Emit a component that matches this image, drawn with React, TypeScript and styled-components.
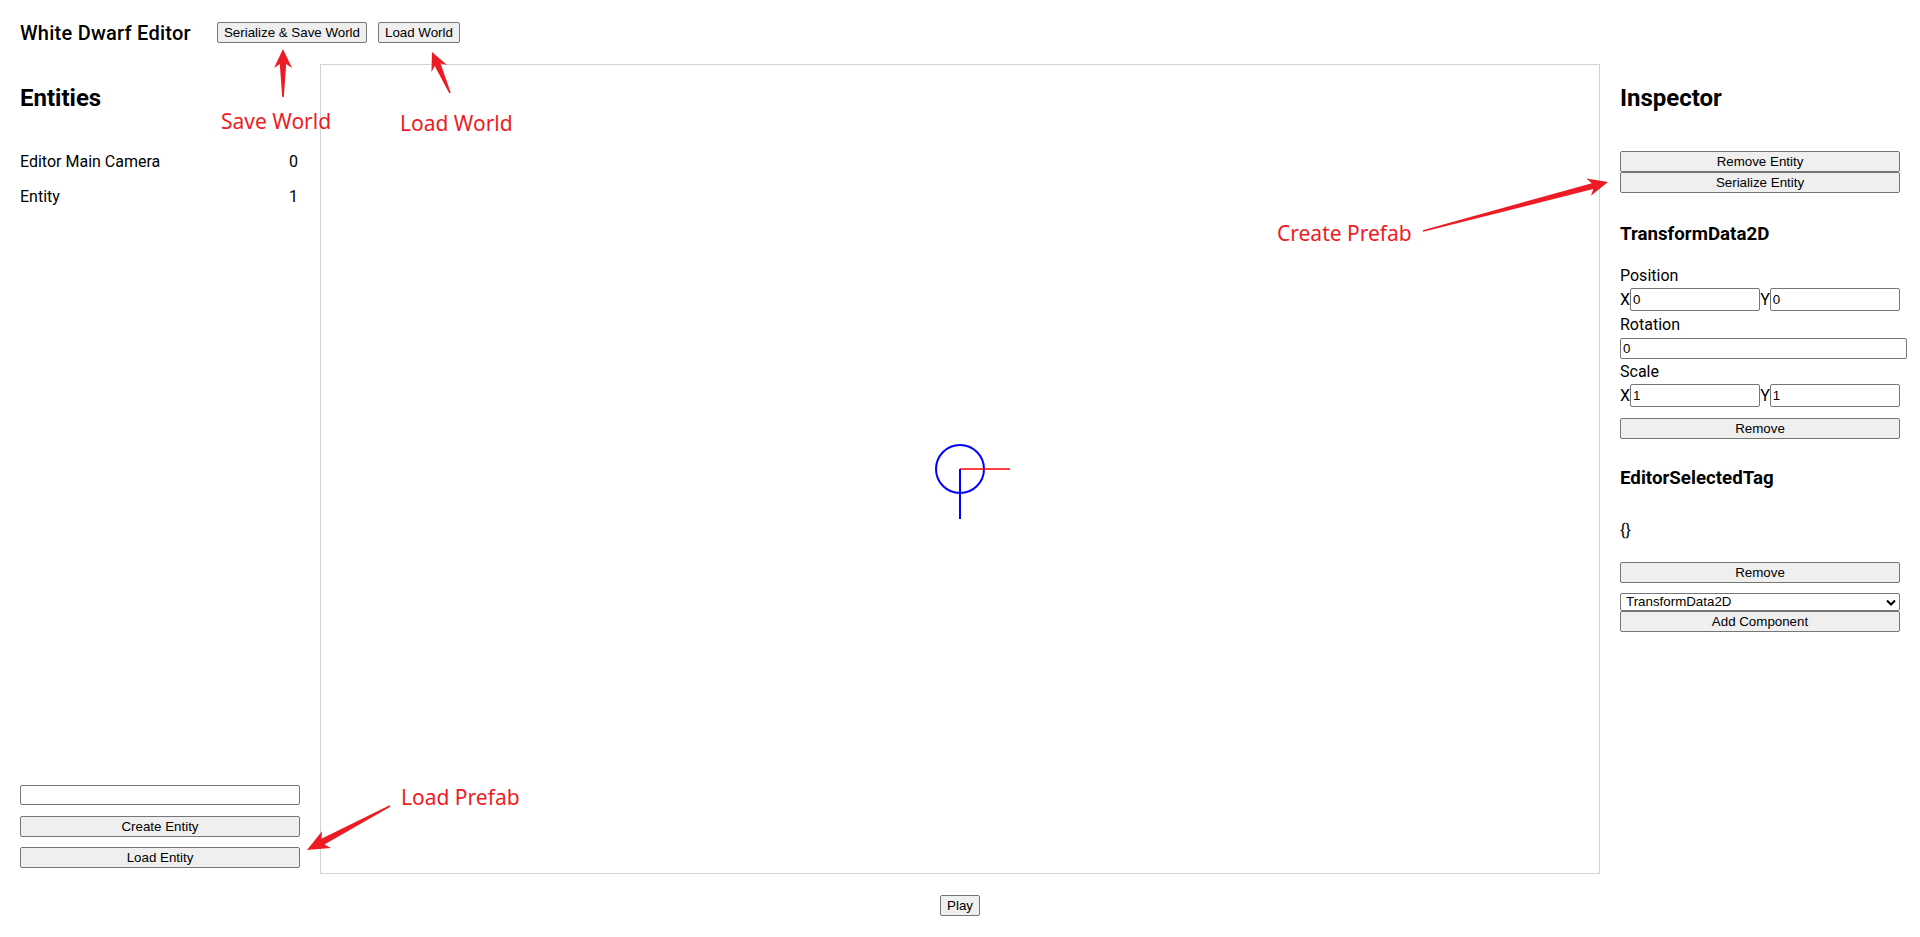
import React from "react";
import styled, { createGlobalStyle } from "styled-components";

const GlobalStyle = createGlobalStyle`
  html, body {
    margin: 0;
    padding: 0;
    background: #ffffff;
    color: #000000;
    font-family: Roboto, "Liberation Sans", Arial, sans-serif;
  }
  * { box-sizing: border-box; }
`;

const Page = styled.div`
  position: relative;
  width: 1920px;
  height: 937px;
  padding: 22px 20px 0;
  overflow: hidden;
`;

const Header = styled.header`
  display: flex;
  align-items: center;
  height: 21px;
`;

const Title = styled.div`
  font-size: 20px;
  line-height: 22px;
  font-weight: 500;
  letter-spacing: 0.25px;
  margin-right: 26px;
`;

const HeaderActions = styled.div`
  display: flex;
  gap: 11px;
`;

const Btn = styled.button<{ $block?: boolean; $mt?: number }>`
  display: block;
  flex: none;
  height: 21px;
  width: ${(p) => (p.$block ? "100%" : "auto")};
  margin-top: ${(p) => p.$mt ?? 0}px;
  padding: 0 6px;
  font-family: "Liberation Sans", Arial, sans-serif;
  font-size: 13.3333px;
  line-height: 19px;
  color: #000;
  background: #efefef;
  border: 1px solid #767676;
  border-radius: 2px;
  white-space: nowrap;
`;

const Main = styled.main`
  display: flex;
  align-items: flex-start;
  gap: 20px;
  margin-top: 21px;
`;

const Sidebar = styled.aside`
  width: 280px;
  height: 810px;
  display: flex;
  flex-direction: column;
  flex: none;
`;

const PanelTitle = styled.h2`
  margin: 20px 0 0;
  font-size: 24px;
  line-height: 28px;
  font-weight: 700;
`;

const EntityList = styled.ul`
  list-style: none;
  margin: 32px 0 0;
  padding: 0;
`;

const EntityRow = styled.li`
  display: flex;
  justify-content: space-between;
  padding: 8px 2px 8px 0;
  font-size: 16px;
  line-height: 19px;
`;

const SidebarFooter = styled.div`
  margin-top: auto;
  padding-bottom: 6px;
  display: flex;
  flex-direction: column;
`;

const TextInput = styled.input`
  display: block;
  flex: none;
  width: 100%;
  height: 20px;
  padding: 0 2px;
  font-family: "Liberation Sans", Arial, sans-serif;
  font-size: 13.3333px;
  border: 1px solid #767676;
  border-radius: 2px;
  background: #fff;
`;

const ViewportColumn = styled.section`
  display: flex;
  flex-direction: column;
  align-items: center;
  flex: none;
`;

const Viewport = styled.div`
  width: 1280px;
  height: 810px;
  border: 1px solid #d3d3d3;
  background: #fff;
`;

const Gizmo = styled.svg`
  display: block;
  width: 100%;
  height: 100%;
`;

const PlayRow = styled.div`
  margin-top: 21px;
`;

const Inspector = styled.aside`
  width: 280px;
  flex: none;
  display: flex;
  flex-direction: column;
`;

const ButtonStack = styled.div<{ $mt: number }>`
  display: flex;
  flex-direction: column;
  margin-top: ${(p) => p.$mt}px;
`;

const ComponentTitle = styled.h3<{ $mt: number }>`
  margin: ${(p) => p.$mt}px 0 0;
  font-size: 18.72px;
  line-height: 22px;
  font-weight: 700;
`;

const FieldLabel = styled.div<{ $mt: number }>`
  margin-top: ${(p) => p.$mt}px;
  font-size: 16px;
  line-height: 19px;
`;

const VecRow = styled.div`
  display: flex;
  align-items: stretch;
  height: 23px;
  margin-top: 3px;
  flex: none;
`;

const Axis = styled.span`
  flex: none;
  font-size: 16px;
  line-height: 23px;
`;

const NumInput = styled.input`
  display: block;
  flex: 1 1 0;
  min-width: 0;
  height: 100%;
  padding: 0 2px;
  font-family: "Liberation Sans", Arial, sans-serif;
  font-size: 13.3333px;
  border: 1px solid #767676;
  border-radius: 2px;
  background: #fff;
  color: #000;
`;

const WideInput = styled.input<{ $mt: number }>`
  display: block;
  flex: none;
  height: 21px;
  width: calc(100% + 7px);
  margin-top: ${(p) => p.$mt}px;
  padding: 0 2px;
  font-family: "Liberation Sans", Arial, sans-serif;
  font-size: 13.3333px;
  border: 1px solid #767676;
  border-radius: 2px;
  background: #fff;
  color: #000;
`;

const TagValue = styled.div<{ $mt: number }>`
  margin-top: ${(p) => p.$mt}px;
  font-size: 16px;
  line-height: 19px;
`;

const SelectWrap = styled.div`
  position: relative;
  flex: none;
  margin-top: 10px;
  height: 18px;
`;

const Select = styled.select`
  appearance: none;
  -webkit-appearance: none;
  display: block;
  width: 100%;
  height: 18px;
  padding: 0 0 0 5px;
  font-family: "Liberation Sans", Arial, sans-serif;
  font-size: 13.3333px;
  line-height: 16px;
  color: #000;
  background: #fff;
  border: 1px solid #767676;
  border-radius: 2px;
`;

const Chevron = styled.svg`
  position: absolute;
  right: 4px;
  top: 6px;
  pointer-events: none;
`;

const Overlay = styled.svg`
  position: absolute;
  left: 0;
  top: 0;
  pointer-events: none;
`;

const Note = styled.span<{ $x: number; $y: number }>`
  position: absolute;
  left: ${(p) => p.$x}px;
  top: ${(p) => p.$y}px;
  font-family: "Noto Sans", "Open Sans", sans-serif;
  font-size: 21px;
  line-height: 22px;
  color: #ed1c24;
  white-space: nowrap;
  pointer-events: none;
`;

type Arrow = {
  from: [number, number];
  to: [number, number];
  head: number;
  barb: number;
  neck: number;
};

const arrows: Arrow[] = [
  { from: [283, 97], to: [283, 49], head: 19, barb: 9, neck: 3.2 },
  { from: [450, 93], to: [432, 52], head: 18, barb: 8.5, neck: 3.2 },
  { from: [1423, 231], to: [1608, 182], head: 20, barb: 9, neck: 3 },
  { from: [390, 806], to: [307, 850], head: 22, barb: 9.5, neck: 3.2 },
];

function arrowPoints(a: Arrow): string {
  const [x1, y1] = a.from;
  const [x2, y2] = a.to;
  const dx = x2 - x1;
  const dy = y2 - y1;
  const L = Math.hypot(dx, dy);
  const ux = dx / L;
  const uy = dy / L;
  const nx = -uy;
  const ny = ux;
  const p = (s: number, t: number) =>
    `${(x1 + ux * s + nx * t).toFixed(2)},${(y1 + uy * s + ny * t).toFixed(2)}`;
  const notch = 4;
  return [
    p(0, -0.8),
    p(L - a.head + notch, -a.neck),
    p(L - a.head, -a.barb),
    p(L, 0),
    p(L - a.head, a.barb),
    p(L - a.head + notch, a.neck),
    p(0, 0.8),
  ].join(" ");
}

const entities = [
  { name: "Editor Main Camera", id: 0 },
  { name: "Entity", id: 1 },
];

export default function App() {
  return (
    <>
      <GlobalStyle />
      <Page>
        <Header>
          <Title>White Dwarf Editor</Title>
          <HeaderActions>
            <Btn>Serialize &amp; Save World</Btn>
            <Btn>Load World</Btn>
          </HeaderActions>
        </Header>

        <Main>
          <Sidebar>
            <PanelTitle>Entities</PanelTitle>
            <EntityList>
              {entities.map((e) => (
                <EntityRow key={e.id}>
                  <span>{e.name}</span>
                  <span>{e.id}</span>
                </EntityRow>
              ))}
            </EntityList>
            <SidebarFooter>
              <TextInput type="text" />
              <Btn $block $mt={11}>Create Entity</Btn>
              <Btn $block $mt={10}>Load Entity</Btn>
            </SidebarFooter>
          </Sidebar>

          <ViewportColumn>
            <Viewport>
              <Gizmo viewBox="0 0 1278 808">
                <circle cx={639} cy={404} r={24} fill="none" stroke="#0000ff" strokeWidth={2} />
                <line x1={639} y1={404} x2={689} y2={404} stroke="#ff0000" strokeWidth={1.5} />
                <line x1={639} y1={404} x2={639} y2={454} stroke="#0000ff" strokeWidth={2} />
              </Gizmo>
            </Viewport>
            <PlayRow>
              <Btn>Play</Btn>
            </PlayRow>
          </ViewportColumn>

          <Inspector>
            <PanelTitle>Inspector</PanelTitle>
            <ButtonStack $mt={39}>
              <Btn $block>Remove Entity</Btn>
              <Btn $block>Serialize Entity</Btn>
            </ButtonStack>

            <ComponentTitle $mt={29.6}>TransformData2D</ComponentTitle>
            <FieldLabel $mt={21.4}>Position</FieldLabel>
            <VecRow>
              <Axis>X</Axis>
              <NumInput defaultValue="0" />
              <Axis>Y</Axis>
              <NumInput defaultValue="0" />
            </VecRow>
            <FieldLabel $mt={4}>Rotation</FieldLabel>
            <WideInput $mt={4} defaultValue="0" />
            <FieldLabel $mt={3}>Scale</FieldLabel>
            <VecRow>
              <Axis>X</Axis>
              <NumInput defaultValue="1" />
              <Axis>Y</Axis>
              <NumInput defaultValue="1" />
            </VecRow>
            <Btn $block $mt={11.5}>Remove</Btn>

            <ComponentTitle $mt={28}>EditorSelectedTag</ComponentTitle>
            <TagValue $mt={31.4}>{"{}"}</TagValue>
            <Btn $block $mt={22}>Remove</Btn>
            <SelectWrap>
              <Select defaultValue="TransformData2D">
                <option>TransformData2D</option>
                <option>EditorSelectedTag</option>
              </Select>
              <Chevron width="10" height="7" viewBox="0 0 10 7">
                <polyline points="1,1.5 5,5.5 9,1.5" fill="none" stroke="#000" strokeWidth="2" />
              </Chevron>
            </SelectWrap>
            <Btn $block>Add Component</Btn>
          </Inspector>
        </Main>

        <Overlay width="1920" height="937" viewBox="0 0 1920 937">
          {arrows.map((a, i) => (
            <polygon key={i} points={arrowPoints(a)} fill="#ed1c24" />
          ))}
        </Overlay>
        <Note $x={221} $y={109.5}>Save World</Note>
        <Note $x={400} $y={111.5}>Load World</Note>
        <Note $x={1277} $y={222}>Create Prefab</Note>
        <Note $x={401} $y={786}>Load Prefab</Note>
      </Page>
    </>
  );
}
